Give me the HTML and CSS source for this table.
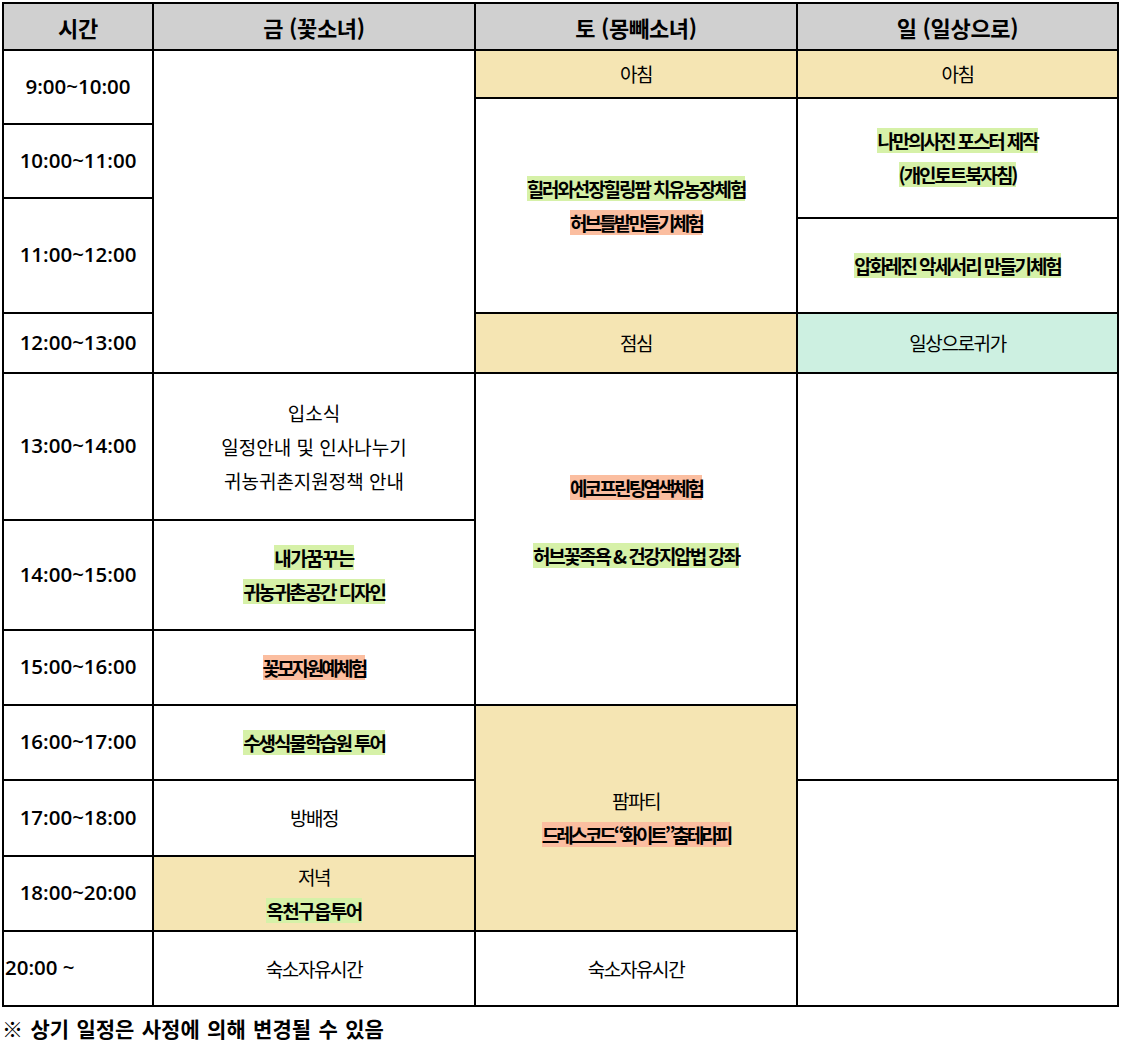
FILE: index.html
```html
<!DOCTYPE html>
<html lang="ko">
<head>
<meta charset="utf-8">
<title>일정표</title>
<link rel="stylesheet" href="styles.css">
</head>
<body>
<div class="schedule">
  <div class="cell head c1 r1">시간</div>
  <div class="cell head c2 r1">금 (꽃소녀)</div>
  <div class="cell head c3 r1">토 (몽빼소녀)</div>
  <div class="cell head c4 r1">일 (일상으로)</div>

  <div class="cell time c1 r2-4">9:00~10:00</div>
  <div class="cell time c1 r4-5">10:00~11:00</div>
  <div class="cell time c1 r5-7">11:00~12:00</div>
  <div class="cell time c1 r7-8">12:00~13:00</div>
  <div class="cell time c1 r8-9">13:00~14:00</div>
  <div class="cell time c1 r9-10">14:00~15:00</div>
  <div class="cell time c1 r10-11">15:00~16:00</div>
  <div class="cell time c1 r11-12">16:00~17:00</div>
  <div class="cell time c1 r12-13">17:00~18:00</div>
  <div class="cell time c1 r13-14">18:00~20:00</div>
  <div class="cell time left c1 r14-15">20:00 ~</div>

  <div class="cell c2 r2-8"></div>
  <div class="cell c2 r8-9">
    <div class="line">입소식</div>
    <div class="line">일정안내 및 인사나누기</div>
    <div class="line">귀농귀촌지원정책 안내</div>
  </div>
  <div class="cell c2 r9-10">
    <div class="line"><span class="hl green soft">내가꿈꾸는</span></div>
    <div class="line"><span class="hl green">귀농귀촌공간 디자인</span></div>
  </div>
  <div class="cell c2 r10-11">
    <div class="line"><span class="hl salmon tight">꽃모자원예체험</span></div>
  </div>
  <div class="cell c2 r11-12">
    <div class="line"><span class="hl green">수생식물학습원 투어</span></div>
  </div>
  <div class="cell c2 r12-13">
    <div class="line cond">방배정</div>
  </div>
  <div class="cell meal c2 r13-14">
    <div class="line cond">저녁</div>
    <div class="line"><span class="hl green soft">옥천구읍투어</span></div>
  </div>
  <div class="cell c2 r14-15">
    <div class="line cond">숙소자유시간</div>
  </div>

  <div class="cell meal c3 r2-3"><div class="line cond">아침</div></div>
  <div class="cell c3 r3-7">
    <div class="line"><span class="hl green">힐러와선장힐링팜 치유농장체험</span></div>
    <div class="line"><span class="hl salmon tight">허브틀밭만들기체험</span></div>
  </div>
  <div class="cell meal c3 r7-8"><div class="line cond">점심</div></div>
  <div class="cell c3 r8-11">
    <div class="line"><span class="hl salmon tight">에코프린팅염색체험</span></div>
    <div class="line"></div>
    <div class="line"><span class="hl green">허브꽃족욕 &amp; 건강지압법 강좌</span></div>
    <div class="line"></div>
  </div>
  <div class="cell meal c3 r11-14">
    <div class="line cond">팜파티</div>
    <div class="line"><span class="hl salmon tighter">드레스코드“화이트”춤테라피</span></div>
  </div>
  <div class="cell c3 r14-15">
    <div class="line cond">숙소자유시간</div>
  </div>

  <div class="cell meal c4 r2-3"><div class="line cond">아침</div></div>
  <div class="cell c4 r3-6">
    <div class="line"><span class="hl green">나만의사진 포스터 제작</span></div>
    <div class="line"><span class="hl green">(개인토트북자침)</span></div>
  </div>
  <div class="cell c4 r6-7">
    <div class="line"><span class="hl green">압화레진 악세서리 만들기체험</span></div>
  </div>
  <div class="cell home c4 r7-8"><div class="line cond">일상으로귀가</div></div>
  <div class="cell c4 r8-12"></div>
  <div class="cell c4 r12-15"></div>
</div>
<p class="note">※ 상기 일정은 사정에 의해 변경될 수 있음</p>
</body>
</html>
```

FILE: styles.css
```css
html, body {
  margin: 0;
  padding: 0;
  background: #ffffff;
}

body {
  padding: 2px;
  font-family: "Noto Sans CJK KR", "Noto Sans", sans-serif;
  color: #000000;
}

.schedule {
  display: grid;
  width: 1113px;
  grid-template-columns: 148px 320px 320px 319px;
  grid-template-rows: 45px 46px 24px 72px 18px 93px 58px 145px 108px 73px 73px 74px 73px 73px;
  gap: 2px;
  padding: 2px;
  background: #000000;
}

.cell {
  background: #ffffff;
  display: flex;
  flex-direction: column;
  justify-content: center;
  align-items: center;
  text-align: center;
  font-size: 19px;
  line-height: 34px;
  white-space: nowrap;
}

.head {
  background: #d0d0d0;
  font-size: 22px;
  font-weight: 700;
  letter-spacing: -0.3px;
}

.time {
  font-family: "Open Sans", "Noto Sans", sans-serif;
  font-size: 20.5px;
  font-weight: 600;
  padding-bottom: 3px;
}

.time.left {
  align-items: flex-start;
  padding-left: 1px;
}

.meal {
  background: #f5e5b3;
}

.home {
  background: #cdf0e1;
}

.line {
  height: 34px;
}

.cond {
  letter-spacing: -1.4px;
}

.hl {
  display: inline-block;
  line-height: 25px;
  font-weight: 700;
  letter-spacing: -2.1px;
}

.hl.tight {
  letter-spacing: -2.8px;
}

.hl.tighter {
  letter-spacing: -3.1px;
}

.hl.soft {
  letter-spacing: -1.6px;
}

.green {
  background: #d6f1a8;
}

.salmon {
  background: #fbbea0;
}

.c1 { grid-column: 1; }
.c2 { grid-column: 2; }
.c3 { grid-column: 3; }
.c4 { grid-column: 4; }

.r1 { grid-row: 1 / 2; }
.r2-3 { grid-row: 2 / 3; }
.r2-4 { grid-row: 2 / 4; }
.r2-8 { grid-row: 2 / 8; }
.r3-6 { grid-row: 3 / 6; }
.r3-7 { grid-row: 3 / 7; }
.r4-5 { grid-row: 4 / 5; }
.r5-7 { grid-row: 5 / 7; }
.r6-7 { grid-row: 6 / 7; }
.r7-8 { grid-row: 7 / 8; }
.r8-9 { grid-row: 8 / 9; }
.r8-11 { grid-row: 8 / 11; }
.r8-12 { grid-row: 8 / 12; }
.r9-10 { grid-row: 9 / 10; }
.r10-11 { grid-row: 10 / 11; }
.r11-12 { grid-row: 11 / 12; }
.r11-14 { grid-row: 11 / 14; }
.r12-13 { grid-row: 12 / 13; }
.r12-15 { grid-row: 12 / 15; }
.r13-14 { grid-row: 13 / 14; }
.r14-15 { grid-row: 14 / 15; }

.note {
  margin: 6px 0 0 0;
  font-size: 21px;
  font-weight: 700;
  line-height: 30px;
  word-spacing: 1.5px;
}
```
